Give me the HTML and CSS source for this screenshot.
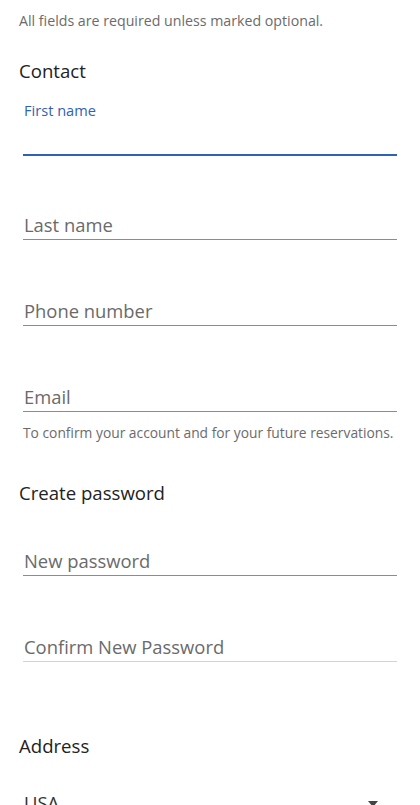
FILE: index.html
```html
<!DOCTYPE html>
<html lang="en">
<head>
<meta charset="utf-8">
<title>Sign up</title>
<link rel="stylesheet" href="styles.css">
</head>
<body>
<main class="form">
  <p class="note">All fields are required unless marked optional.</p>

  <h2 class="section-title title-contact">Contact</h2>

  <div class="field field-focused">
    <label class="field-label">First name</label>
    <div class="field-input"></div>
  </div>
  <div class="field">
    <label class="field-label"></label>
    <div class="field-input">Last name</div>
  </div>
  <div class="field">
    <label class="field-label"></label>
    <div class="field-input">Phone number</div>
  </div>
  <div class="field">
    <label class="field-label"></label>
    <div class="field-input">Email</div>
  </div>
  <p class="helper">To confirm your account and for your future reservations.</p>

  <h2 class="section-title title-password">Create password</h2>

  <div class="field field-first">
    <label class="field-label"></label>
    <div class="field-input">New password</div>
  </div>
  <div class="field field-light">
    <label class="field-label"></label>
    <div class="field-input">Confirm New Password</div>
  </div>

  <h2 class="section-title title-address">Address</h2>

  <div class="field field-select">
    <label class="field-label"></label>
    <div class="field-input select-input">
      <span class="select-value">USA</span>
      <span class="select-arrow"></span>
    </div>
  </div>
</main>
</body>
</html>
```

FILE: styles.css
```css
html, body {
  margin: 0;
  padding: 0;
  background: #ffffff;
}

body {
  font-family: "Open Sans", "Noto Sans", "Liberation Sans", sans-serif;
  color: #222222;
  overflow: hidden;
}

.form {
  padding: 12px 23px 0 19px;
}

.note {
  margin: 0;
  font-size: 14.2px;
  line-height: 18px;
  color: #6b6b6b;
  white-space: nowrap;
}

.helper {
  margin: 12px 0 0 4px;
  font-size: 13.8px;
  line-height: 18px;
  color: #6b6b6b;
  white-space: nowrap;
}

.section-title {
  margin: 0;
  font-size: 18.6px;
  line-height: 24px;
  font-weight: 400;
  color: #222222;
}

.title-contact {
  margin-top: 29px;
}

.title-password {
  margin-top: 39px;
}

.title-address {
  margin-top: 72px;
}

.field {
  margin-left: 4px;
  margin-top: 32px;
  display: flex;
  flex-direction: column;
  gap: 9px;
}

.field-focused {
  margin-top: 18px;
}

.field-focused .field-label {
  margin-bottom: -1px;
}

.title-contact + .field-focused + .field {
  margin-top: 30px;
}

.field-first {
  margin-top: 17px;
}

.field-select {
  margin-top: 6px;
}

.field-label {
  display: block;
  height: 18px;
  font-size: 14.6px;
  line-height: 18px;
  color: #2f63b3;
  padding-left: 1px;
}

.field-input {
  height: 24px;
  font-size: 18.4px;
  line-height: 24px;
  color: #6a6a6a;
  padding-bottom: 2px;
  padding-left: 1px;
  border-bottom: 1px solid #8c8c8c;
}

.field-focused .field-input {
  padding-bottom: 3px;
  border-bottom: 2px solid #2e62b2;
}

.field-light .field-input {
  border-bottom-color: #d4d4d4;
}

.select-input {
  display: flex;
  justify-content: space-between;
  align-items: center;
  color: #333333;
}

.select-arrow {
  width: 0;
  height: 0;
  margin-right: 19px;
  margin-top: 2px;
  border-left: 5.5px solid transparent;
  border-right: 5.5px solid transparent;
  border-top: 6px solid #444444;
}
```
